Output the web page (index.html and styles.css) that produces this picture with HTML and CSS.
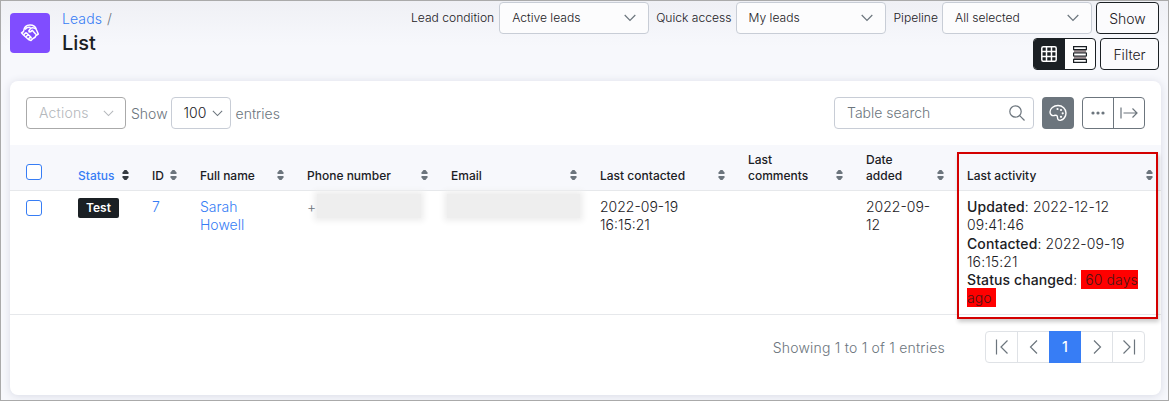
FILE: index.html
```html
<!DOCTYPE html>
<html lang="en">
<head>
<meta charset="utf-8">
<title>Leads List</title>
<link rel="stylesheet" href="styles.css">
</head>
<body>
<svg class="defs" width="0" height="0">
  <symbol id="down" viewBox="0 0 12 8"><path d="M.7 1 6 6.300 11.300 1"/></symbol>
  <symbol id="sort" viewBox="0 0 7 10"><path class="up" d="M2.500 0h2L6.500 2.500V4h-6V2.500z"/><path class="dn" d="M.5 6h6v1.500L4.500 10h-2L.5 7.500z"/></symbol>
</svg>
<div class="page">
  <header class="top">
    <div class="logo"><svg width="20" height="20" viewBox="0 0 20 20"><path d="M3.500 8.500C4 4.500 6.500 2 10 2c3.200 0 5.500 1.500 6.300 4.500L18.300 11l-2.300 1.500c-.5 2-1.500 2.500-3 3L11 17.500 8.500 16.500 3.500 12 1.500 9.800z"/><path d="M5 6.500C6.500 4.500 8.500 4 10.500 4.500M8.500 8.500c1.500.8 2.700.2 3.700-1.200l3.800 4.200M8.500 8.500l2-3.200c1.500-1 3.500-.8 5.500.7M3.800 11.800l2.200-2.300M6 13.800l2.200-2.300M8.500 16l2-2.300M6 9.500l2.200 2 2.300 2.200 1 2"/></svg></div>
    <div class="crumbs"><div class="path"><a>Leads</a><span>/</span></div><h1>List</h1></div>
    <div class="controls">
      <div class="line">
        <label class="first">Lead condition</label><div class="select tight"><span>Active leads</span><svg class="chev"><use href="#down"/></svg></div>
        <label>Quick access</label><div class="select"><span>My leads</span><svg class="chev"><use href="#down"/></svg></div>
        <label>Pipeline</label><div class="select"><span>All selected</span><svg class="chev"><use href="#down"/></svg></div>
        <button class="btn show">Show</button>
      </div>
      <div class="line second">
        <div class="toggle"><span class="on"><svg width="16" height="16" viewBox="0 0 16 16"><rect x=".8" y=".8" width="14.400" height="14.400" rx="1.500"/><path d="M1 5.500h14M1 10.500h14M5.500 1v14M10.500 1v14"/></svg></span><span><svg width="14" height="17" viewBox="0 0 14 17"><path class="mid" d="M1 4h12v3H1zM1 10h12v3H1z"/><path d="M.6.600h12.800v3H.6zM.6 7h12.800v3H.6zM.6 13.400h12.800v3H.6z"/></svg></span></div>
        <button class="btn filter">Filter</button>
      </div>
    </div>
  </header>
  <main class="card">
    <div class="tools">
      <div class="actions"><span>Actions</span><svg class="chev small"><use href="#down"/></svg></div>
      <span class="word">Show</span>
      <div class="count"><span>100</span><svg class="chev small"><use href="#down"/></svg></div>
      <span class="word">entries</span>
      <div class="search"><span>Table search</span><svg width="16" height="16" viewBox="0 0 16 16"><circle cx="6.500" cy="6.500" r="5.700"/><path d="m10.700 10.700 4.800 4.800"/></svg></div>
      <div class="palette"><svg width="18" height="18" viewBox="0 0 18 18"><path d="M9 1.500C4.500 1.500 1 4.500 1 8c0 2.500 2 4 4 3.500 2-.7 3.500 0 3.500 2 0 2 1 3 3 2.800 3.200-.5 5.500-3.800 5.500-7.300 0-4-3.500-7.500-8-7.500z"/><g class="paint"><circle cx="8.500" cy="5" r="1.100"/><circle cx="12" cy="6" r="1.100"/><circle cx="13.700" cy="9.300" r="1.100"/><circle cx="12" cy="12.800" r="1.100"/></g></svg></div>
      <div class="pair"><span><svg class="dots" width="14" height="4" viewBox="0 0 14 4"><circle cx="2" cy="2" r="1.600"/><circle cx="7" cy="2" r="1.600"/><circle cx="12" cy="2" r="1.600"/></svg></span><span><svg width="18" height="12" viewBox="0 0 18 12"><path d="M1 .5v11M3.500 6H17M12.500 1.500 17 6l-4.500 4.500"/></svg></span></div>
    </div>
    <table>
      <colgroup><col class="c0"><col class="c1"><col class="c2"><col class="c3"><col class="c4"><col class="c5"><col class="c6"><col class="c7"><col class="c8"><col class="c9"></colgroup>
      <thead><tr>
        <th><i class="check"></i></th>
        <th class="active"><div>Status<svg class="sort"><use href="#sort"/></svg></div></th>
        <th><div>ID<svg class="sort"><use href="#sort"/></svg></div></th>
        <th><div>Full name<svg class="sort"><use href="#sort"/></svg></div></th>
        <th><div>Phone number<svg class="sort"><use href="#sort"/></svg></div></th>
        <th><div>Email<svg class="sort"><use href="#sort"/></svg></div></th>
        <th><div>Last contacted<svg class="sort"><use href="#sort"/></svg></div></th>
        <th><div>Last<br>comments<svg class="sort"><use href="#sort"/></svg></div></th>
        <th><div>Date<br>added<svg class="sort"><use href="#sort"/></svg></div></th>
        <th><div>Last activity<svg class="sort"><use href="#sort"/></svg></div></th>
      </tr></thead>
      <tbody><tr>
        <td><i class="check"></i></td>
        <td><span class="badge">Test</span></td>
        <td><a>7</a></td>
        <td><a>Sarah<br>Howell</a></td>
        <td><div class="phone"><span class="plus">+</span><span class="blur"></span></div></td>
        <td><div class="blur mail"></div></td>
        <td>2022-09-19<br>16:15:21</td>
        <td></td>
        <td>2022-09-<br>12</td>
        <td class="activity"><b>Updated</b>: 2022-12-12<br>09:41:46<br><b>Contacted</b>: 2022-09-19<br>16:15:21<br><b>Status changed</b>: <mark>&nbsp;60 days<br>ago&nbsp;</mark></td>
      </tr></tbody>
    </table>
    <div class="foot">
      <span>Showing 1 to 1 of 1 entries</span>
      <div class="pages">
        <span><svg width="14" height="16" viewBox="0 0 14 16"><path d="M1.500 .5v15M12.500 1.500 6 8l6.500 6.500"/></svg></span>
        <span><svg width="14" height="16" viewBox="0 0 14 16"><path d="M10 1.500 3.500 8l6.500 6.500"/></svg></span>
        <span class="current">1</span>
        <span><svg width="14" height="16" viewBox="0 0 14 16"><path d="M4 1.500 10.500 8 4 14.500"/></svg></span>
        <span><svg width="14" height="16" viewBox="0 0 14 16"><path d="M12.500 .5v15M1.500 1.500 8 8l-6.500 6.500"/></svg></span>
      </div>
    </div>
  </main>
  <div class="callout"></div>
</div>
</body>
</html>
```
FILE: styles.css
```css
* { box-sizing: border-box; }
body { margin: 0; font: 300 14px/18px Inter, "Liberation Sans", sans-serif; color: #1b2024; }
svg { fill: none; stroke: #6c757d; stroke-width: 1.2; flex: none; }
.defs { position: absolute; }
a { color: #377df5; }
.page { position: relative; width: 1169px; height: 401px; border: 1px solid #aaa; padding: 0 7px 0 9px; background: linear-gradient(#eff0f5, #f7f8fc 45px); overflow: hidden; }
.top { display: flex; height: 80px; padding-top: 1px; }
.logo { width: 40px; height: 40px; margin-top: 11px; border-radius: 4px; background: #804dff; display: flex; align-items: center; justify-content: center; }
.logo svg { stroke: #fff; stroke-width: 1.5; stroke-linejoin: round; }
.crumbs { margin: 8px 0 0 12px; }
.path { display: flex; gap: 5px; line-height: 18px; color: #6c757d; letter-spacing: .1px; }
h1 { margin: 2px 0 0; font: 500 20px/26px Inter, sans-serif; }
.controls { flex: 1; padding-right: 2px; }
.line { display: flex; justify-content: flex-end; align-items: center; height: 32px; font-size: 12.1px; }
.line label { margin-right: 4px; }
.line .first { margin-right: 5px; }
.select { width: 150px; height: 32px; margin-right: 8px; padding: 0 12px; border: 1px solid #c8cdd6; border-radius: 4px; background: #fcfcfd; display: flex; align-items: center; justify-content: space-between; }
.select:nth-of-type(3) { margin-right: 4px; }
.tight { margin-right: 7px; }
.chev { width: 12px; height: 8px; }
.small { width: 11px; height: 7px; }
.btn { height: 32px; padding: 0; border: 1px solid #1b2024; border-radius: 4px; background: #fbfbfd; font: 300 14px Inter, sans-serif; color: #1b2024; }
.show { width: 63px; }
.filter { width: 59px; }
.second { margin-top: 4px; gap: 4px; }
.toggle { display: flex; width: 63px; height: 32px; border: 1px solid #1b2024; border-radius: 4px; background: #fff; overflow: hidden; }
.toggle span { flex: 1; display: flex; align-items: center; justify-content: center; }
.toggle svg { stroke: #1b2024; }
.toggle .on { background: #1b2024; }
.toggle .on svg { stroke: #fff; stroke-width: 1.5; }
.mid { fill: #978b8e; stroke: none; }
.card { width: 1151px; height: 314px; border-radius: 8px; background: #fff; box-shadow: 0 1px 8px #d8dae5; }
.tools { display: flex; padding: 16px 16px 0; height: 64px; color: #6c757d; }
.tools > div { height: 32px; border-radius: 4px; display: flex; align-items: center; }
.actions { width: 100px; border: 1px solid #aaa; padding: 0 11px 0 12px; justify-content: space-between; color: #b5b8bc; letter-spacing: .2px; }
.actions svg { stroke: #b5b8bc; }
.word { margin: 8px 3px 0 5px; }
.count { width: 60px; border: 1px solid #c8cdd6; padding: 0 7px 0 12px; justify-content: space-between; color: #1b2024; }
.search { width: 200px; margin-left: auto; border: 1px solid #c8cdd6; padding: 0 8px 0 12px; justify-content: space-between; }
.palette { width: 32px; margin: 0 8px; background: #6c757d; justify-content: center; }
.palette svg { stroke: #fff; stroke-width: 1.4; }
.palette .paint { fill: #fff; stroke: none; }
.pair { width: 63px; border: 1px solid #6c757d; }
.pair span { width: 31px; height: 30px; display: flex; align-items: center; justify-content: center; }
.pair span + span { border-left: 1px solid #6c757d; }
.pair .dots { fill: #6c757d; stroke: none; }
table { width: 1151px; table-layout: fixed; border-collapse: separate; border-spacing: 0; }
.c0 { width: 60px; } .c1 { width: 74px; } .c2 { width: 48px; } .c3 { width: 107px; } .c4 { width: 144px; } .c5 { width: 149px; } .c6 { width: 148px; } .c7 { width: 118px; } .c8 { width: 101px; } .c9 { width: 202px; }
th { height: 46px; padding: 0 8px 6px; vertical-align: bottom; text-align: left; background: #f7f8fc; border-bottom: 1px solid #e6e8eb; font-size: 12px; line-height: 16px; font-weight: 500; }
th:first-child { padding: 0 16px 10px; }
th div { display: flex; justify-content: space-between; align-items: flex-end; white-space: nowrap; }
.sort { width: 7px; height: 10px; margin: 0 7px 4px 0; fill: #6c757d; stroke: none; }
.active { color: #377df5; }
.active .sort { fill: #343a40; }
td { height: 124px; padding: 7px 8px 0; vertical-align: top; border-bottom: 1px solid #e6e8eb; }
td:first-child { padding: 9px 16px 0; }
th:last-child, td:last-child { padding-right: 1px; }
.activity { line-height: 18.3px; letter-spacing: .1px; }
.check { display: block; width: 16px; height: 16px; border: 1px solid #377df5; border-radius: 3px; background: #fff; }
.badge { display: block; width: 41px; height: 20px; border-radius: 2px; background: #1b2024; color: #fff; font: 600 12px/20px Inter, sans-serif; text-align: center; }
b { font-weight: 500; }
mark { padding: 1px 0; background: red; color: #4b1515; }
.phone { display: flex; }
.plus { position: relative; z-index: 1; width: 10px; color: #6c757d; }
.blur { display: block; width: 104px; height: 24px; margin-top: -4px; background: #eee; box-shadow: 0 0 6px 3px #eee; }
.mail { width: 133px; margin-left: -4px; }
.foot { display: flex; justify-content: flex-end; padding: 16px 16px 0 0; color: #6c757d; }
.foot > span { margin: 8px 40px 0 0; letter-spacing: .22px; }
.pages { display: flex; width: 160px; height: 32px; border: 1px solid #dfe2e6; border-radius: 4px; }
.pages span { flex: 1 1 0; display: flex; align-items: center; justify-content: center; }
.pages span + span { border-left: 1px solid #dfe2e6; }
.pages .current { flex: 0 0 32px; margin: -1px 0; background: #377df5; color: #fff; font-weight: 500; border: 0; }
.pages .current + span { border-left: 0; }
.callout { position: absolute; left: 956px; top: 151px; width: 201px; height: 167px; border: 2px solid #d40000; box-shadow: 1px 3px 4px #0003; }
```
